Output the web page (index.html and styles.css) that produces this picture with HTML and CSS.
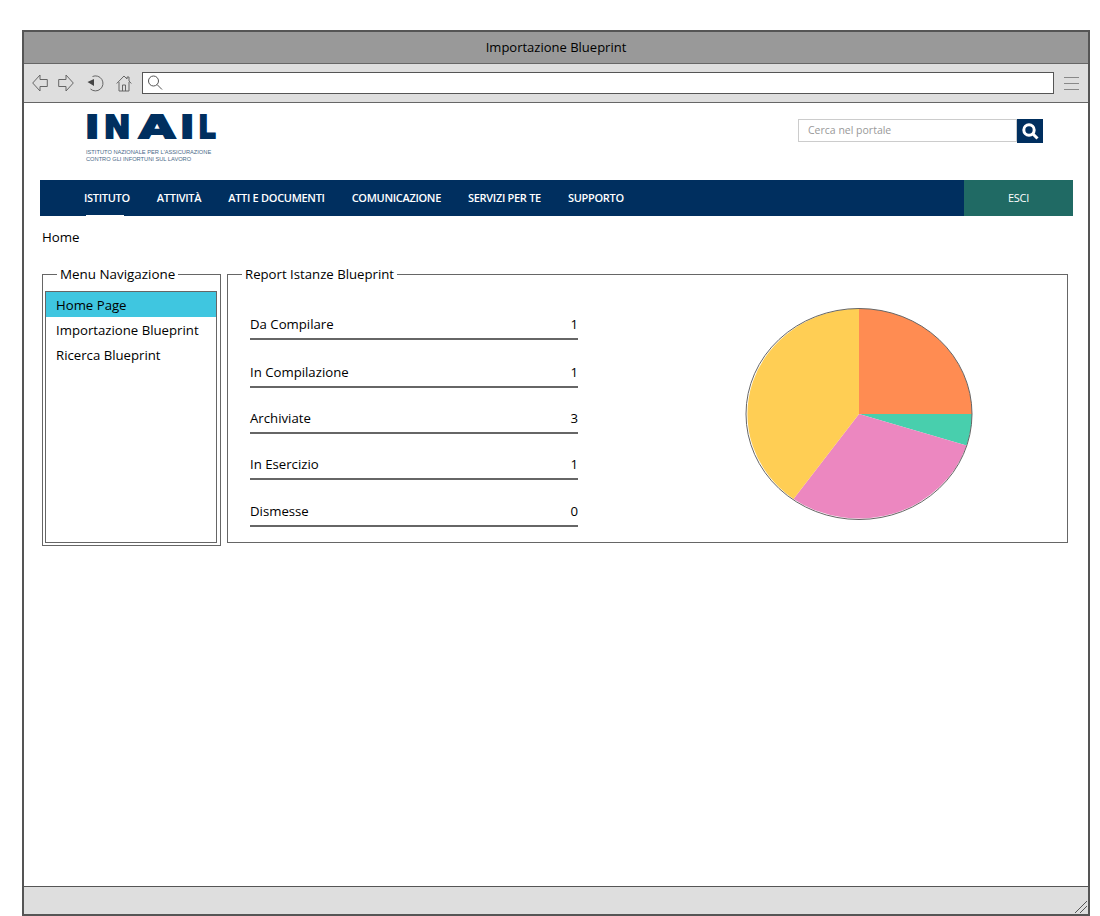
FILE: index.html
```html
<!DOCTYPE html>
<html lang="en">
  <head>
    <meta charset="UTF-8" />
    <title>Importazione Blueprint</title>
    <link rel="stylesheet" href="styles.css">
  </head>
  <body>
    <div class="browser">
      <div class="title-bar">Importazione Blueprint</div>

      <!-- Browser toolbar -->
      <div class="toolbar">
        <svg class="tool-icon" width="16" height="18" viewBox="0 0 16 18"><path d="M8 1 .7 9 8 17v-4.500h7.300v-7H8z"/></svg>
        <svg class="tool-icon tool-fwd" width="16" height="18" viewBox="0 0 16 18"><path d="M8 1l7.300 8L8 17v-4.500H.7v-7H8z"/></svg>
        <svg class="tool-icon tool-undo" width="18" height="18" viewBox="0 0 18 18"><path d="M5.500 2.500A7.500 7.500 0 1 1 3.500 15"/><path class="solid" d="M.5 8 7 5v7z"/></svg>
        <svg class="tool-icon tool-home" width="16" height="18" viewBox="0 0 16 18"><path d="M.7 9.500 8 2l3 3V3h2v4l2.300 2.500M3 8v9h10V8M6.500 17v-6h3v6"/></svg>
        <div class="address">
          <svg width="16" height="16" viewBox="0 0 16 16"><circle cx="6.500" cy="6" r="5"/><path d="m10 9.500 5 5"/></svg>
        </div>
        <div class="hamburger"><span></span><span></span><span></span></div>
      </div>

      <div class="page">
        <header class="site-header">
          <div class="logo">
            <div class="logo-mark"><span class="ltr-i">I</span><span class="ltr-n">N</span><span class="ltr-a">A</span><span class="ltr-i">I</span><span class="ltr-l">L</span></div>
            <div class="logo-sub">ISTITUTO NAZIONALE PER L'ASSICURAZIONE<br>CONTRO GLI INFORTUNI SUL LAVORO</div>
          </div>
          <form class="search">
            <div class="search-field">Cerca nel portale</div>
            <div class="search-btn">
              <svg width="18" height="18" viewBox="0 0 18 18"><circle cx="8" cy="8" r="5.200"/><path d="m12 12 4.500 4.500"/></svg>
            </div>
          </form>
        </header>

        <nav class="main-nav">
          <a class="nav-item active">ISTITUTO</a>
          <a class="nav-item">ATTIVITÀ</a>
          <a class="nav-item">ATTI E DOCUMENTI</a>
          <a class="nav-item">COMUNICAZIONE</a>
          <a class="nav-item">SERVIZI PER TE</a>
          <a class="nav-item">SUPPORTO</a>
          <a class="nav-exit">ESCI</a>
        </nav>

        <div class="breadcrumb">Home</div>

        <div class="panels">
          <fieldset class="panel menu-panel">
            <legend>Menu Navigazione</legend>
            <ul class="menu-list">
              <li class="selected">Home Page</li>
              <li>Importazione Blueprint</li>
              <li>Ricerca Blueprint</li>
            </ul>
          </fieldset>

          <fieldset class="panel report-panel">
            <legend>Report Istanze Blueprint</legend>
            <div class="report-body">
              <div class="stats">
                <div class="stat stat-first"><span>Da Compilare</span><span>1</span></div>
                <div class="stat stat-tall"><span>In Compilazione</span><span>1</span></div>
                <div class="stat"><span>Archiviate</span><span>3</span></div>
                <div class="stat"><span>In Esercizio</span><span>1</span></div>
                <div class="stat stat-last"><span>Dismesse</span><span>0</span></div>
              </div>
              <svg class="pie" width="230" height="214" viewBox="0 0 230 214">
                <path fill="#ff8c52" d="M114 106V.5A113 105.500 0 0 1 227 106z"/>
                <path fill="#48cfad" d="M114 106H227A113 105.500 0 0 1 221.500 137.500z"/>
                <path fill="#ec87c0" d="M114 106 221.500 137.500A113 105.500 0 0 1 48.500 191z"/>
                <path fill="#ffce54" d="M114 106 48.500 191A113 105.500 0 0 1 114 .5z"/>
                <ellipse class="pie-edge" cx="114" cy="106" rx="113" ry="105.500"/>
              </svg>
            </div>
          </fieldset>
        </div>
      </div>

      <div class="status-bar">
        <svg width="14" height="14" viewBox="0 0 14 14"><path d="M13 1 1 13M13 6l-7 7"/></svg>
      </div>
    </div>
  </body>
</html>
```

FILE: styles.css
```css
/* Global Styles */
html, body {
  height: 916px;
  margin: 0;
  overflow: hidden;
}

body {
  background: white;
  font-family: "Open Sans", "Noto Sans", sans-serif;
  color: #000;
}

/* Browser Frame */
.browser {
  box-sizing: border-box;
  display: flex;
  flex-direction: column;
  width: 1068px;
  height: 886px;
  margin: 30px 0 0 22px;
  border: 2px solid #555;
}

.title-bar {
  height: 31px;
  line-height: 31px;
  flex: none;
  background: #999;
  border-bottom: 1px solid #666;
  text-align: center;
  font-size: 13px;
}

.toolbar {
  box-sizing: border-box;
  display: flex;
  align-items: center;
  height: 39px;
  flex: none;
  padding-left: 8px;
  background: #dedede;
  border-bottom: 1px solid #666;
}

.tool-icon {
  fill: none;
  stroke: #666;
  stroke-width: 1;
}

.tool-icon .solid {
  fill: #444;
  stroke: none;
}

.tool-fwd { margin-left: 10px; }
.tool-undo { margin-left: 13px; }
.tool-home { margin-left: 11px; }

.address {
  box-sizing: border-box;
  display: flex;
  align-items: center;
  width: 912px;
  height: 22px;
  margin-left: 10px;
  padding-left: 4px;
  background: white;
  border: 1px solid #555;
}

.address svg {
  fill: none;
  stroke: #555;
}

.hamburger {
  width: 15px;
  margin-left: 10px;
}

.hamburger span {
  display: block;
  height: 1px;
  margin: 5px 0;
  background: #888;
}

/* Page */
.page {
  flex: 1;
  min-height: 0;
  background: white;
}

.site-header {
  display: flex;
  justify-content: space-between;
  height: 77px;
  padding: 9px 45px 0 62px;
  box-sizing: border-box;
}

.logo {
  width: 129px;
  color: #002f5f;
}

.logo-mark {
  display: flex;
  justify-content: space-between;
  height: 27px;
  margin-top: 2px;
  font-family: "DejaVu Sans", sans-serif;
  font-weight: bold;
  font-size: 32px;
  line-height: 27px;
  -webkit-text-stroke: 2px #002f5f;
}

.logo-mark span {
  display: block;
  text-align: center;
}

.ltr-i { width: 11px; transform: scaleX(1.2); }
.ltr-n { width: 30px; }
.ltr-a { width: 38px; transform: scaleX(1.45); }
.ltr-l { width: 18px; transform: scaleX(.85); }

.logo-sub {
  margin-top: 8px;
  font-family: "Liberation Sans", sans-serif;
  font-size: 5.700px;
  line-height: 7px;
  color: #4b6a88;
  white-space: nowrap;
}

.search {
  display: flex;
  margin-top: 7px;
  height: 24px;
}

.search-field {
  box-sizing: border-box;
  width: 219px;
  height: 23px;
  padding-left: 9px;
  border: 1px solid #ccc;
  font-size: 10.500px;
  line-height: 21px;
  color: #999;
}

.search-btn {
  display: flex;
  align-items: center;
  justify-content: center;
  width: 26px;
  background: #002f5f;
}

.search-btn svg {
  fill: none;
  stroke: white;
  stroke-width: 3;
}

/* Main Nav */
.main-nav {
  display: flex;
  height: 36px;
  margin: 0 15px 0 16px;
  padding-left: 44px;
  background: #002f5f;
  color: white;
  font-size: 11px;
  font-weight: 600;
  letter-spacing: -.3px;
  line-height: 36px;
}

.nav-item {
  margin-right: 27px;
  position: relative;
}

.nav-item.active::after {
  content: "";
  position: absolute;
  left: 2px;
  right: 6px;
  bottom: 0;
  height: 1px;
  background: white;
}

.nav-exit {
  width: 109px;
  margin-left: auto;
  background: #206a64;
  text-align: center;
  font-weight: 400;
}

.breadcrumb {
  margin: 12px 0 0 18px;
  font-size: 13.300px;
  line-height: 18px;
}

/* Panels */
.panels {
  display: flex;
  gap: 6px;
  margin: 19px 0 0 18px;
  align-items: flex-start;
}

.panel {
  box-sizing: border-box;
  margin: 0;
  padding: 0;
  border: 1px solid #666;
}

.panel legend {
  margin-left: 14px;
  padding: 0 3px;
  font-size: 13.200px;
  line-height: 18px;
}

.menu-panel {
  width: 179px;
  height: 281px;
  padding: 8px 3px 2px 2px;
}

.menu-panel legend {
  margin-left: 12px;
  font-size: 13.400px;
}

.menu-list {
  box-sizing: border-box;
  height: 100%;
  margin: 0;
  padding: 0;
  list-style: none;
  border: 1px solid #666;
  font-size: 13.200px;
}

.menu-list li {
  height: 25px;
  line-height: 27px;
  padding-left: 10px;
}

.menu-list li.selected {
  background: #3fc6e0;
}

.report-panel {
  width: 841px;
  height: 278px;
}

.report-body {
  display: flex;
  padding: 0 0 0 22px;
}

.stats {
  width: 328px;
  font-size: 13.200px;
}

.stat {
  display: flex;
  justify-content: space-between;
  align-items: flex-end;
  height: 46px;
  padding-bottom: 5px;
  box-sizing: border-box;
  border-bottom: 2px solid #666;
}

.stat-first { height: 57px; }
.stat-tall { height: 48px; }
.stat-last { height: 47px; }

.pie {
  margin: 25px 0 0 167px;
}

.pie-edge {
  fill: none;
  stroke: #666;
  stroke-width: 1;
}

/* Status Bar */
.status-bar {
  box-sizing: border-box;
  display: flex;
  align-items: flex-end;
  justify-content: flex-end;
  height: 28px;
  flex: none;
  background: #dedede;
  border-top: 1px solid #555;
}

.status-bar svg {
  fill: none;
  stroke: #555;
}
```
